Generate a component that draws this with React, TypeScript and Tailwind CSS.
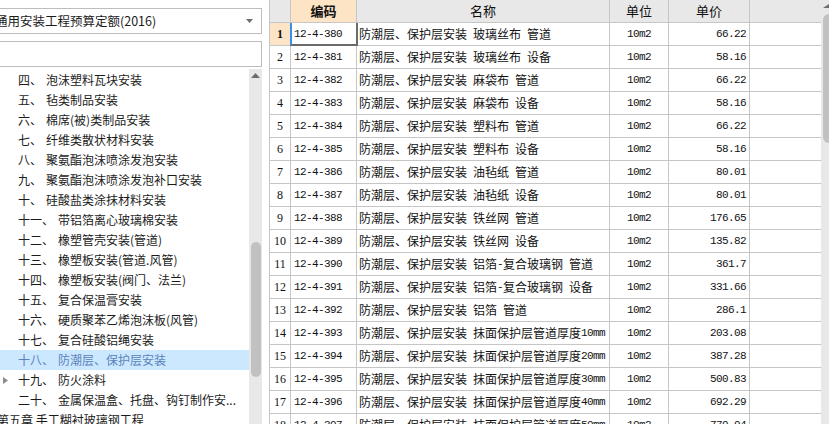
import React from 'react';

const cjk = '"Noto Sans CJK SC", "Noto Sans", sans-serif';
const mono = '"Liberation Mono", "Noto Sans CJK SC", monospace';

const tree: [string, string][] = [
  ['四、', '泡沫塑料瓦块安装'],
  ['五、', '毡类制品安装'],
  ['六、', '棉席(被)类制品安装'],
  ['七、', '纤维类散状材料安装'],
  ['八、', '聚氨酯泡沫喷涂发泡安装'],
  ['九、', '聚氨酯泡沫喷涂发泡补口安装'],
  ['十、', '硅酸盐类涂抹材料安装'],
  ['十一、', '带铝箔离心玻璃棉安装'],
  ['十二、', '橡塑管壳安装(管道)'],
  ['十三、', '橡塑板安装(管道.风管)'],
  ['十四、', '橡塑板安装(阀门、法兰)'],
  ['十五、', '复合保温膏安装'],
  ['十六、', '硬质聚苯乙烯泡沫板(风管)'],
  ['十七、', '复合硅酸铝绳安装'],
  ['十八、', '防潮层、保护层安装'],
  ['十九、', '防火涂料'],
  ['二十、', '金属保温盒、托盘、钩钉制作安...'],
];

const prefix = '防潮层、保护层安装 ';
const rows: [string, string, string][] = [
  ['12-4-380', '玻璃丝布 管道', '66.22'],
  ['12-4-381', '玻璃丝布 设备', '58.16'],
  ['12-4-382', '麻袋布 管道', '66.22'],
  ['12-4-383', '麻袋布 设备', '58.16'],
  ['12-4-384', '塑料布 管道', '66.22'],
  ['12-4-385', '塑料布 设备', '58.16'],
  ['12-4-386', '油毡纸 管道', '80.01'],
  ['12-4-387', '油毡纸 设备', '80.01'],
  ['12-4-388', '铁丝网 管道', '176.65'],
  ['12-4-389', '铁丝网 设备', '135.82'],
  ['12-4-390', '铝箔-复合玻璃钢 管道', '361.7'],
  ['12-4-391', '铝箔-复合玻璃钢 设备', '331.66'],
  ['12-4-392', '铝箔 管道', '286.1'],
  ['12-4-393', '抹面保护层管道厚度10mm', '203.08'],
  ['12-4-394', '抹面保护层管道厚度20mm', '387.28'],
  ['12-4-395', '抹面保护层管道厚度30mm', '500.83'],
  ['12-4-396', '抹面保护层管道厚度40mm', '692.29'],
  ['12-4-397', '抹面保护层管道厚度50mm', '779.94'],
];

// half-width runs get a 6px-per-char mono look, like the grid's SimSun
const MixedText = ({ text }: { text: string }) => {
  const parts = text.match(/[\x20-\x7e]+|[^\x20-\x7e]+/g) || [];
  return (
    <>
      {parts.map((p, i) =>
        /^[\x20-\x7e]+$/.test(p) ? (
          <span key={i} className="inline-block text-[11px] tracking-[-0.6px] whitespace-pre" style={{ fontFamily: mono }}>
            {p}
          </span>
        ) : (
          <span key={i}>{p}</span>
        )
      )}
    </>
  );
};

const TreeRow = ({ no, label, idx }: { no: string; label: string; idx: number }) => {
  const selected = idx === 14;
  const hasArrow = idx === 15;
  return (
    <div
      className={`relative flex items-center h-5 pl-[18px] pr-2 whitespace-nowrap ${selected ? 'bg-[#cce8ff] text-[#5a83bb]' : 'text-[#1b1b1b]'}`}
    >
      {hasArrow && (
        <svg className="absolute left-[3px] top-[7px]" width="5" height="7" viewBox="0 0 5 7">
          <path d="M0 0 L5 3.5 L0 7 Z" fill="#8a8a8a" />
        </svg>
      )}
      <span className="mr-1 shrink-0">{no}</span>
      <span className="overflow-hidden">{label}</span>
    </div>
  );
};

export default function App() {
  return (
    <div className="w-[829px] h-[424px] overflow-hidden flex bg-white text-[12px]" style={{ fontFamily: cjk }}>
      {/* left tree panel */}
      <div className="w-[262px] shrink-0 flex flex-col">
        <div className="mt-2 h-[26px] ml-[-6px] border border-[#bdbdbd] flex items-center pr-2 overflow-hidden">
          <span className="flex-1 text-[12.5px] text-[#1b1b1b] leading-none whitespace-nowrap">通用安装工程预算定额(2016)</span>
          <svg width="7" height="4" viewBox="0 0 7 4">
            <path d="M0 0 H7 L3.5 4 Z" fill="#6e6e6e" />
          </svg>
        </div>
        <div className="mt-[7px] h-[26px] ml-[-6px] border border-[#bdbdbd]" />
        <div className="mt-[2px] flex-1 flex min-h-0">
          <div className="flex-1 pt-px overflow-hidden leading-5">
            {tree.map(([no, label], i) => (
              <TreeRow key={i} no={no} label={label} idx={i} />
            ))}
            <div className="h-5 ml-[-3px] text-[#1b1b1b] whitespace-nowrap">第五章 手工糊衬玻璃钢工程</div>
          </div>
          <div className="w-[13px] bg-[#e8e8e8] flex flex-col items-center">
            <svg className="mt-[4px]" width="9" height="5" viewBox="0 0 9 5">
              <path d="M0 5 L4.5 0 L9 5 Z" fill="#6e6e6e" />
            </svg>
            <div className="mt-[164px] w-[10px] h-[135px] rounded-full bg-[#c1c1c1]" />
          </div>
        </div>
      </div>

      {/* splitter */}
      <div className="w-[7px] shrink-0 bg-white" />

      {/* table */}
      <div className="w-[552px] shrink-0 border-l border-[#c6c6c6] text-[#111]">
        <div className="flex h-[23px] border-b border-[#c6c6c6] bg-[#e8e8e8] items-center">
          <div className="w-[21px] h-full border-r border-[#c6c6c6]" />
          <div className="w-[66px] h-full border-r border-[#c6c6c6] bg-[#fde4c5] flex items-center justify-center font-bold text-[13px]">编码</div>
          <div className="w-[253px] h-full border-r border-[#c6c6c6] flex items-center justify-center text-[13px]">名称</div>
          <div className="w-[59px] h-full border-r border-[#c6c6c6] flex items-center justify-center text-[13px]">单位</div>
          <div className="w-[81px] h-full border-r border-[#c6c6c6] flex items-center justify-center text-[13px]">单价</div>
        </div>
        {rows.map(([code, name, price], i) => (
          <div key={code} className="flex h-[23px] border-b border-[#c6c6c6] items-center">
            <div
              className={`w-[21px] h-full border-r border-[#c6c6c6] flex items-center justify-center text-[12px] ${i === 0 ? 'bg-[#fde4c5] font-bold' : ''}`}
              style={{ fontFamily: '"Liberation Serif", serif' }}
            >
              {i + 1}
            </div>
            <div className="relative w-[66px] h-full border-r border-[#c6c6c6] flex items-center pl-[3px] text-[11px] tracking-[-0.6px]" style={{ fontFamily: mono }}>
              {code}
              {i === 0 && (
                <div className="absolute inset-y-0 left-[-1px] right-[-2px] bottom-[-1px] border-l-2 border-l-[#3b8fe8] border-r-2 border-b-2 border-r-[#6b6b6b] border-b-[#6b6b6b]" />
              )}
            </div>
            <div className="w-[253px] h-full border-r border-[#c6c6c6] flex items-center pl-[2px] whitespace-nowrap overflow-hidden">
              <MixedText text={prefix + name} />
            </div>
            <div className="w-[59px] h-full border-r border-[#c6c6c6] flex items-center justify-center text-[11px] tracking-[-0.6px]" style={{ fontFamily: mono }}>
              10m2
            </div>
            <div className="w-[81px] h-full border-r border-[#c6c6c6] flex items-center justify-end pr-[3px] text-[11px] tracking-[-0.6px]" style={{ fontFamily: mono }}>
              {price}
            </div>
          </div>
        ))}
      </div>

      {/* table scrollbar */}
      <div className="flex-1 bg-white flex">
        <div className="flex-1" />
        <div className="w-[8px] bg-[#e8e8e8] flex flex-col items-end">
          <svg className="mt-[4px]" width="6" height="4" viewBox="0 0 6 4">
            <path d="M0 4 L6 0 L6 4 Z" fill="#6e6e6e" />
          </svg>
          <div className="mt-[6px] ml-[2px] w-[6px] h-[129px] rounded-l-full bg-[#c1c1c1]" />
        </div>
      </div>
    </div>
  );
}
